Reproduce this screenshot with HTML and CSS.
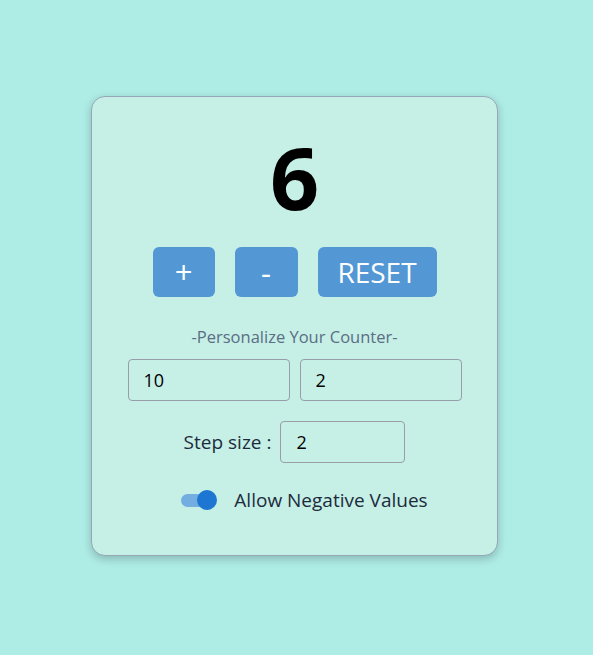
FILE: index.html
```html
<!DOCTYPE html>
<html>
<head>
<meta charset="utf-8">
<link rel="stylesheet" href="styles.css">
</head>
<body>
<div class="card">
  <div class="count">6</div>
  <div class="buttons">
    <button class="btn btn-sq">+</button>
    <button class="btn btn-sq">-</button>
    <button class="btn btn-reset">RESET</button>
  </div>
  <div class="subtitle">-Personalize Your Counter-</div>
  <div class="limits">
    <input class="field" type="text" value="10">
    <input class="field" type="text" value="2">
  </div>
  <div class="step">
    <span class="step-label">Step size :</span>
    <input class="field field-step" type="text" value="2">
  </div>
  <div class="toggle-row">
    <span class="toggle"><span class="track"></span><span class="thumb"></span></span>
    <span class="toggle-label">Allow Negative Values</span>
  </div>
</div>
</body>
</html>
```
FILE: styles.css
```css
html, body { margin: 0; padding: 0; }
body {
  background: #aeece6;
  font-family: "Open Sans", "Noto Sans", sans-serif;
  width: 593px;
  height: 655px;
  display: flex;
  justify-content: center;
  padding-top: 96px;
  box-sizing: border-box;
}
.card {
  width: 407px;
  height: 460px;
  box-sizing: border-box;
  background: #c6efe6;
  border: 1px solid #96a8b8;
  border-radius: 14px;
  box-shadow: 0 3px 8px rgba(0,0,0,0.22);
  display: flex;
  flex-direction: column;
  align-items: center;
  margin-left: -4px;
}
.count {
  font-size: 86px;
  font-weight: 700;
  color: #000;
  line-height: 1;
  margin-top: 37px;
  height: 113px;
}
.buttons {
  display: flex;
  gap: 20px;
}
.btn {
  background: #5398d4;
  border: none;
  border-radius: 6px;
  color: #fff;
  font-family: inherit;
  font-size: 28px;
  height: 50px;
  padding: 0;
}
.btn-sq { width: 62px; font-size: 31px; }
.btn-sq:nth-child(2) { width: 63px; }
.btn-reset { width: 119px; }
.subtitle {
  margin-top: 29px;
  font-size: 16.5px;
  color: #5a6e84;
  line-height: 22px;
}
.limits {
  display: flex;
  gap: 10px;
  margin-top: 11px;
}
.field {
  width: 162px;
  height: 42px;
  box-sizing: border-box;
  border: 1px solid #989ea8;
  border-radius: 4px;
  background: transparent;
  font-family: inherit;
  font-size: 18px;
  color: #000;
  padding: 0 15px;
  outline: none;
}
.step {
  display: flex;
  align-items: center;
  gap: 9px;
  margin-top: 20px;
}
.step-label {
  font-size: 19px;
  color: #1c2b3c;
}
.field-step { width: 125px; }
.toggle-row {
  display: flex;
  align-items: center;
  gap: 17px;
  margin-top: 24px;
  margin-left: 20px;
}
.toggle {
  position: relative;
  width: 36px;
  height: 20px;
  display: inline-block;
}
.track {
  position: absolute;
  left: 0;
  top: 4px;
  width: 34px;
  height: 13px;
  border-radius: 7px;
  background: #74aee0;
}
.thumb {
  position: absolute;
  right: 0;
  top: 0;
  width: 20px;
  height: 20px;
  border-radius: 50%;
  background: #1d76d2;
}
.toggle-label {
  font-size: 19px;
  color: #1c2b3c;
}
```
